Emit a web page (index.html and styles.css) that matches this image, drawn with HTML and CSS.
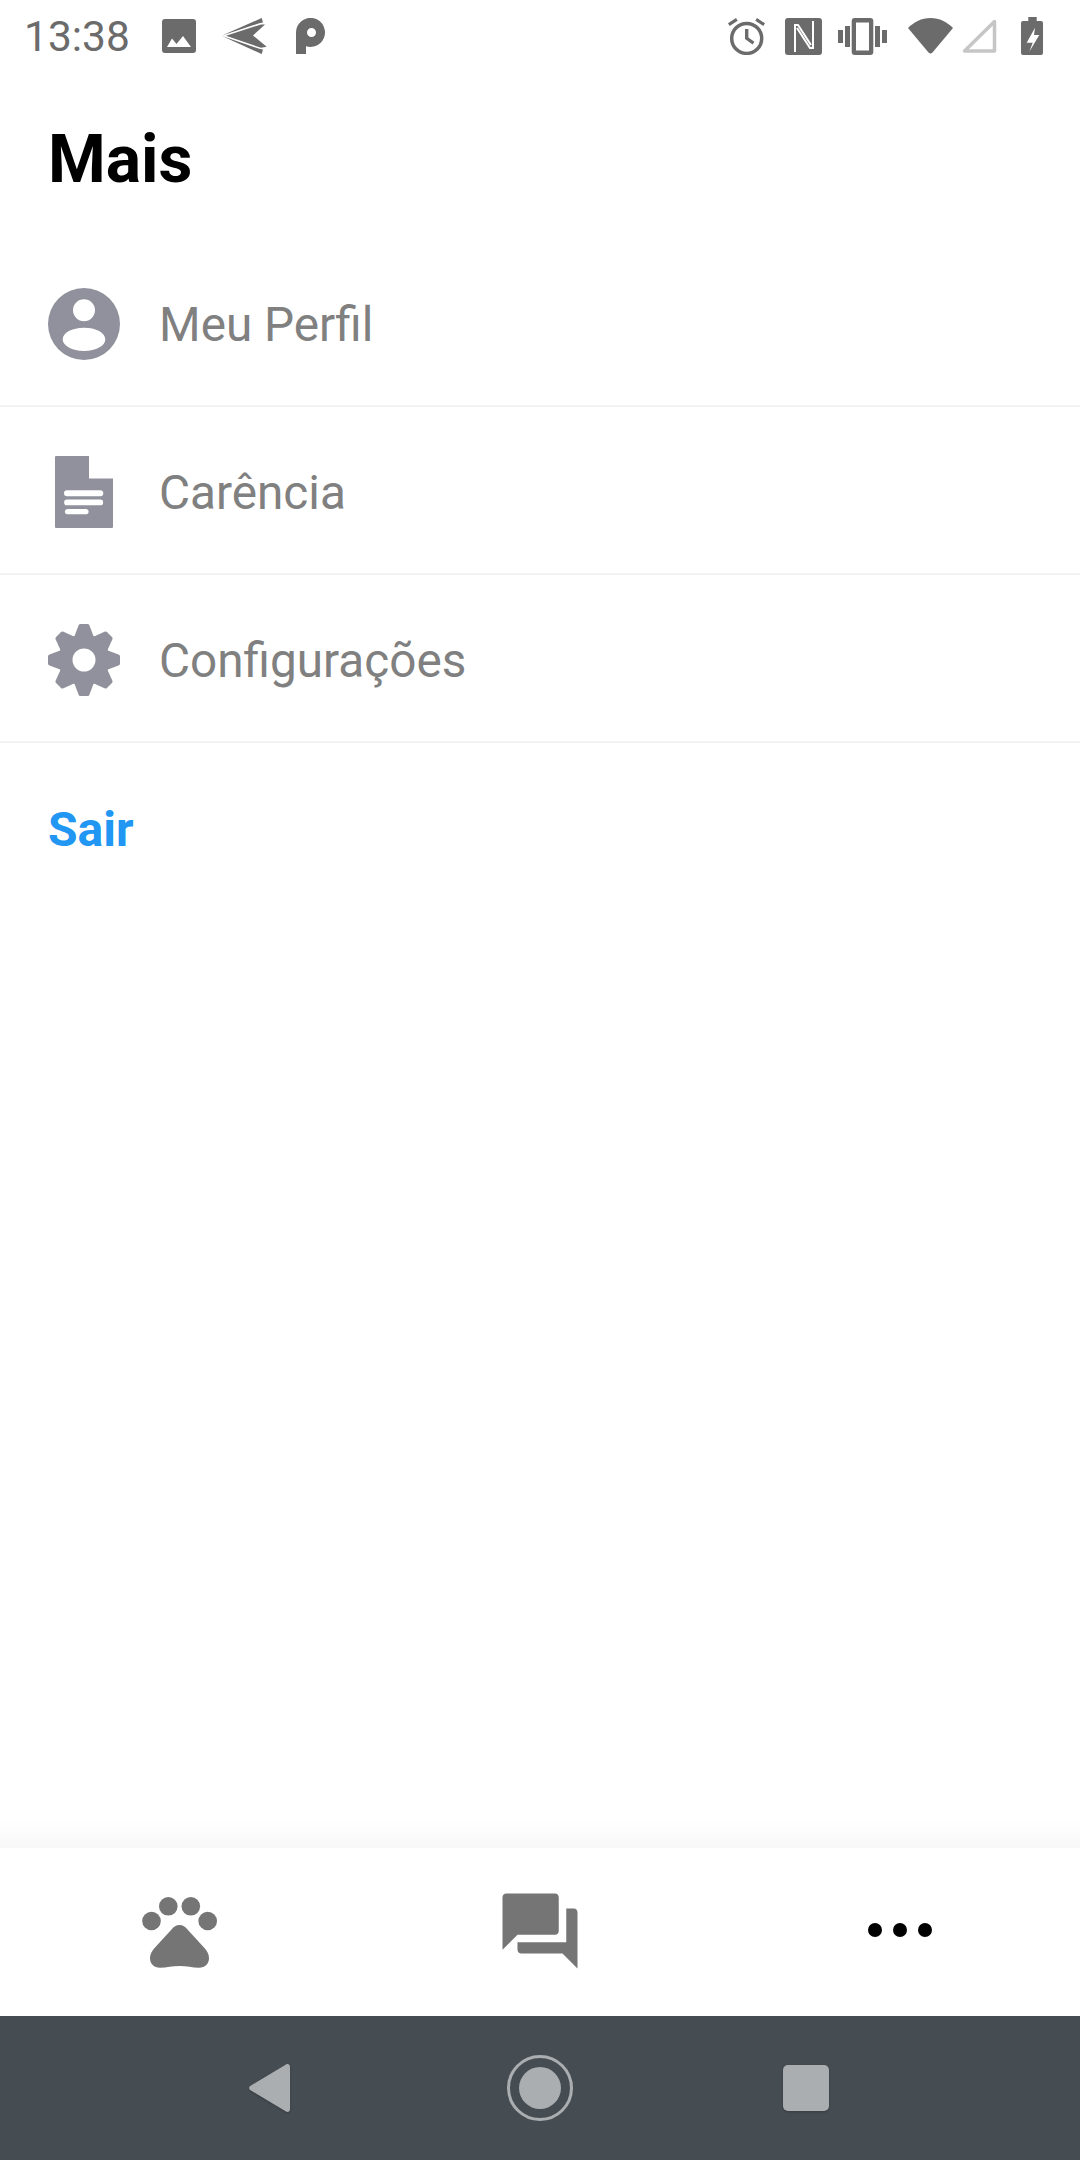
FILE: index.html
```html
<!DOCTYPE html>
<html lang="pt-BR">

<head>
    <title>Mais</title>
    <meta charset="UTF-8">
    <meta name="viewport" content="width=device-width, initial-scale=1">
    <link rel="stylesheet" href="styles.css">
</head>

<body>
    <div class="app">
        <!-- status bar -->
        <div class="status">
            <span class="clock">13:38</span>
            <svg class="st st-image" viewBox="0 0 34 34"><path d="M3 0h28a3 3 0 0 1 3 3v28a3 3 0 0 1-3 3H3a3 3 0 0 1-3-3V3a3 3 0 0 1 3-3zM5 28h24l-8-11-6.500 8-4.500-5.500z" fill-rule="evenodd"/></svg>
            <svg class="st st-send" viewBox="0 0 45 36"><path d="M0 17.500L39.700 0 41 4.500 38 5zM4 17.700l35-11.200h4L31 17.500l13.700 11.200-5.700 1.100zM0 18l38 13 3 .5-1.300 4.500z"/></svg>
            <svg class="st st-p" viewBox="0 0 30 36"><path d="M0 36V14.500A14.500 14.500 0 1 1 10 28.200V36zM15.500 10a4.500 4.500 0 1 0 0 9 4.500 4.500 0 0 0 0-9z" fill-rule="evenodd"/></svg>
            <div class="status-right">
                <svg class="st st-alarm" viewBox="0 0 38 37"><circle cx="19.700" cy="20.400" r="15" fill="none" stroke="#6b6b6b" stroke-width="3.500"/><path d="M18 11h3.400v8.500l6 4.300-1.800 2.700-7.600-5.500zM1 5.300L9 0l1.700 2.700L2.700 8zM38 5.300L30 0l-1.700 2.700L36.300 8z"/></svg>
                <svg class="st st-nfc" viewBox="0 0 37 37"><path d="M3 0h31a3 3 0 0 1 3 3v31a3 3 0 0 1-3 3H3a3 3 0 0 1-3-3V3a3 3 0 0 1 3-3z"/><path class="nfc-line" d="M10 34V7h3l13 20"/><path class="nfc-line" d="M28 3v27h-3L12 10"/></svg>
                <svg class="st st-vib" viewBox="0 0 49 37"><path d="M0 12h5v13H0zM44 12h5v13h-5zM7 8h5v21H7zM37 8h5v21h-5zM16.700 0h15.600a3 3 0 0 1 3 3v31a3 3 0 0 1-3 3H16.700a3 3 0 0 1-3-3V3a3 3 0 0 1 3-3zM18 4.500v28h13v-28z" fill-rule="evenodd"/></svg>
                <svg class="st st-wifi" viewBox="0 0 47 36"><path d="M1 10C7 4 14.500 0 23.500 0S40 4 46 10L25.500 34.500a2.700 2.700 0 0 1-4 0z"/></svg>
                <svg class="st st-signal" viewBox="0 0 35 34"><path d="M32.500 2.500V32H2.500z" fill="none" stroke="#c6c6c6" stroke-width="3.500" stroke-linejoin="round"/></svg>
                <svg class="st st-batt" viewBox="0 0 22 38"><path d="M7.300 0h8.400v4H20a2 2 0 0 1 2 2v30a2 2 0 0 1-2 2H2a2 2 0 0 1-2-2V6a2 2 0 0 1 2-2h5.300zM14 10.700L5.700 25.700h6L8.300 34.700 18.300 18H13z" fill-rule="evenodd"/></svg>
            </div>
        </div>

        <h1 class="title">Mais</h1>

        <!-- menu -->
        <div class="menu">
            <div class="item">
                <svg class="item-icon" viewBox="0 0 72 72"><path d="M36 0a36 36 0 1 1 0 72 36 36 0 0 1 0-72zM36 11.300a11 11 0 1 0 0 22 11 11 0 0 0 0-22zM36 39.700c-12 0-21.300 5-21.300 11.600S24 63 36 63s21.300-5 21.300-11.700S48 39.700 36 39.700z" fill-rule="evenodd"/></svg>
                <span class="item-text">Meu Perfil</span>
            </div>
            <div class="item">
                <svg class="item-icon" viewBox="0 0 72 72"><path d="M8 0h33v22.600h24V71a1 1 0 0 1-1 1H8a1 1 0 0 1-1-1V1a1 1 0 0 1 1-1zM19 34.300a3 3 0 0 0 0 6h33.300a3 3 0 0 0 0-6zM19 43.600a2.800 2.800 0 0 0 0 5.700h33.300a2.800 2.800 0 0 0 0-5.700zM19 53a2.700 2.700 0 0 0 0 5.300h19.500a2.700 2.700 0 0 0 0-5.300z" fill-rule="evenodd"/></svg>
                <span class="item-text">Carência</span>
            </div>
            <div class="item">
                <svg class="item-icon" viewBox="0 0 72 72">
                    <defs><path id="tooth" d="M32.500 0h7c1 0 1.500.5 2 1.500l4.500 12H26l4.500-12c.5-1 1-1.500 2-1.500z"/></defs>
                    <use href="#tooth"/>
                    <use href="#tooth" transform="rotate(45 36 36)"/>
                    <use href="#tooth" transform="rotate(90 36 36)"/>
                    <use href="#tooth" transform="rotate(135 36 36)"/>
                    <use href="#tooth" transform="rotate(180 36 36)"/>
                    <use href="#tooth" transform="rotate(225 36 36)"/>
                    <use href="#tooth" transform="rotate(270 36 36)"/>
                    <use href="#tooth" transform="rotate(315 36 36)"/>
                    <circle cx="36" cy="36" r="18.500" fill="none" stroke="#91919d" stroke-width="14"/>
                </svg>
                <span class="item-text">Configurações</span>
            </div>
        </div>
        <div class="logout">Sair</div>

        <div class="spacer"></div>

        <!-- tabs -->
        <div class="shadow"></div>
        <div class="tabs">
            <div class="tab">
                <svg class="tab-paw" viewBox="0 0 75 71"><circle cx="9.500" cy="24" r="9.300"/><circle cx="26.300" cy="9.300" r="9.300"/><circle cx="48.800" cy="9.300" r="9.300"/><circle cx="65.700" cy="24" r="9.300"/><path d="M37.500 28C41 28 43 29.500 45.500 32.500L62 50.500C65 54 67 57 67 61C67 67 63 70.700 57 70.700C50 70.700 45 69 37.500 69C30 69 25 70.700 18 70.700C12 70.700 8 67 8 61C8 57 10 54 13 50.500L29.500 32.500C32 29.500 34 28 37.500 28z"/></svg>
            </div>
            <div class="tab">
                <svg class="tab-chat" viewBox="0 0 24 24"><path d="M21 6h-2v9H6v2c0 .55.45 1 1 1h11l4 4V7c0-.55-.45-1-1-1zm-4 6V3c0-.55-.45-1-1-1H3c-.55 0-1 .45-1 1v14l4-4h10c.55 0 1-.45 1-1z"/></svg>
            </div>
            <div class="tab">
                <div class="dots"><i></i><i></i><i></i></div>
            </div>
        </div>

        <!-- android nav -->
        <div class="nav">
            <svg class="nav-back" viewBox="0 0 43 50"><path d="M3 22.500L38 1.500c2-1 4 0 4 2.500v42c0 2.500-2 3.500-4 2.500L3 27.500c-2.500-1-2.500-4 0-5z"/></svg>
            <div class="nav-home"><div></div></div>
            <div class="nav-square"></div>
        </div>
    </div>
</body>

</html>
```

FILE: styles.css
```css
* {
    margin: 0;
    padding: 0;
    box-sizing: border-box;
}

body {
    background: #fff;
    font-family: Roboto, "Noto Sans", sans-serif;
}

.app {
    width: 1080px;
    height: 2160px;
    display: flex;
    flex-direction: column;
    overflow: hidden;
}

.status {
    height: 72px;
    padding: 0 37px 0 24px;
    display: flex;
    align-items: center;
    flex-shrink: 0;
}

.clock {
    font-size: 42.5px;
    color: #6b6b6b;
    width: 138px;
}

.st {
    display: block;
    fill: #6b6b6b;
}

.st-image {
    width: 34px;
    height: 34px;
}

.st-send {
    width: 45px;
    height: 36px;
    margin-left: 26px;
}

.st-p {
    width: 30px;
    height: 36px;
    margin-left: 29px;
}

.status-right {
    margin-left: auto;
    display: flex;
    align-items: center;
}

.st-alarm {
    width: 38px;
    height: 37px;
}

.st-nfc {
    width: 37px;
    height: 37px;
    margin-left: 20px;
}

.nfc-line {
    fill: none;
    stroke: #fff;
    stroke-width: 2;
}

.st-vib {
    width: 49px;
    height: 37px;
    margin-left: 16px;
}

.st-wifi {
    width: 47px;
    height: 36px;
    margin-left: 20px;
}

.st-signal {
    width: 35px;
    height: 34px;
    margin-left: 8px;
}

.st-batt {
    width: 22px;
    height: 38px;
    margin-left: 24px;
}

.title {
    font-size: 66px;
    font-weight: 700;
    line-height: 74px;
    color: #000;
    padding: 51px 0 0 48px;
}

.menu {
    margin-top: 42px;
}

.item {
    height: 168px;
    border-bottom: 2px solid #f2f2f2;
    display: flex;
    align-items: center;
    padding: 4px 0 0 48px;
}

.item-icon {
    width: 72px;
    height: 72px;
    fill: #91919d;
    flex-shrink: 0;
}

.item-text {
    font-size: 47.7px;
    color: #808080;
    margin: 0 0 -1px 39px;
}

.logout {
    font-size: 48px;
    font-weight: 700;
    color: #2196f3;
    line-height: 56px;
    padding: 59px 0 0 48px;
}

.spacer {
    flex: 1;
}

.shadow {
    height: 28px;
    background: linear-gradient(#fff, #f8f8f8);
}

.tabs {
    height: 168px;
    display: flex;
    flex-shrink: 0;
    padding-bottom: 2px;
}

.tab {
    flex: 1;
    display: flex;
    align-items: center;
    justify-content: center;
}

.tab-paw {
    width: 75px;
    height: 71px;
    margin: 2px 1px 0 0;
    fill: #757575;
}

.tab-chat {
    width: 90px;
    height: 90px;
    fill: #757575;
}

.dots {
    display: flex;
    gap: 11px;
    margin-bottom: 2px;
}

.dots i {
    display: block;
    width: 14px;
    height: 14px;
    border-radius: 50%;
    background: #000;
}

.nav {
    height: 144px;
    background: #454c52;
    display: flex;
    align-items: center;
    padding-left: 248px;
    flex-shrink: 0;
}

.nav-back {
    width: 43px;
    height: 50px;
    fill: #aaaeb1;
    filter: drop-shadow(0 1px 1px rgba(0, 0, 0, .2));
}

.nav-home {
    width: 66px;
    height: 66px;
    margin-left: 216px;
    border: 3px solid #aaaeb1;
    border-radius: 50%;
    display: flex;
    align-items: center;
    justify-content: center;
}

.nav-home div {
    width: 42px;
    height: 42px;
    border-radius: 50%;
    background: #aaaeb1;
}

.nav-square {
    width: 46px;
    height: 46px;
    margin-left: 210px;
    border-radius: 5px;
    background: #aaaeb1;
    filter: drop-shadow(0 1px 1px rgba(0, 0, 0, .2));
}
```
